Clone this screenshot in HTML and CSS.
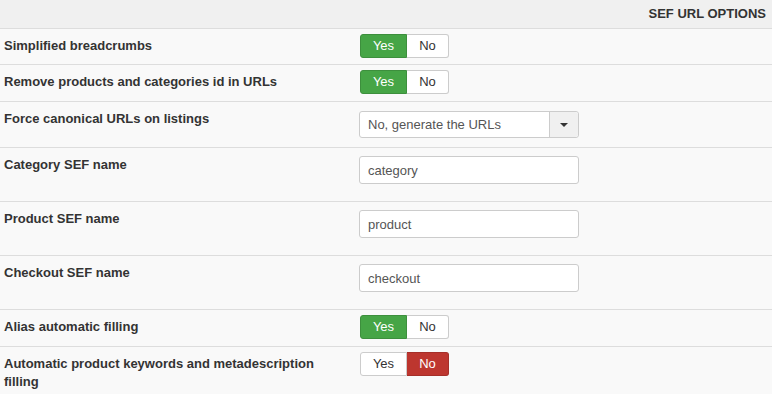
FILE: index.html
```html
<!DOCTYPE html>
<html lang="en">
<head>
    <meta charset="UTF-8">
    <title>SEF URL options</title>
    <link rel="stylesheet" href="styles.css">
</head>
<body>

    <div class="config">
        <div class="config-head">SEF URL options</div>

        <div class="row row-toggle row-first">
            <div class="key">Simplified breadcrumbs</div>
            <div class="value">
                <div class="toggle">
                    <span class="btn btn-yes active-yes">Yes</span>
                    <span class="btn btn-no">No</span>
                </div>
            </div>
        </div>

        <div class="row row-toggle">
            <div class="key">Remove products and categories id in URLs</div>
            <div class="value">
                <div class="toggle">
                    <span class="btn btn-yes active-yes">Yes</span>
                    <span class="btn btn-no">No</span>
                </div>
            </div>
        </div>

        <div class="row row-select">
            <div class="key">Force canonical URLs on listings</div>
            <div class="value">
                <div class="select">
                    <span class="select-text">No, generate the URLs</span>
                    <span class="select-arrow"><b></b></span>
                </div>
            </div>
        </div>

        <div class="row row-input">
            <div class="key">Category SEF name</div>
            <div class="value"><input class="text" type="text" value="category"></div>
        </div>

        <div class="row row-input">
            <div class="key">Product SEF name</div>
            <div class="value"><input class="text" type="text" value="product"></div>
        </div>

        <div class="row row-input">
            <div class="key">Checkout SEF name</div>
            <div class="value"><input class="text" type="text" value="checkout"></div>
        </div>

        <div class="row row-toggle">
            <div class="key">Alias automatic filling</div>
            <div class="value">
                <div class="toggle">
                    <span class="btn btn-yes active-yes">Yes</span>
                    <span class="btn btn-no">No</span>
                </div>
            </div>
        </div>

        <div class="row row-last">
            <div class="key">Automatic product keywords and metadescription filling</div>
            <div class="value">
                <div class="toggle">
                    <span class="btn btn-yes">Yes</span>
                    <span class="btn btn-no active-no">No</span>
                </div>
            </div>
        </div>
    </div>

</body>
</html>
```

FILE: styles.css
```css
body {
    font-family: 'Liberation Sans', Arial, sans-serif;
    font-size: 13px;
    line-height: 18px;
    margin: 0;
    padding: 0;
    background-color: #f9f9f9;
    color: #333;
}

.config-head {
    box-sizing: border-box;
    height: 29px;
    padding: 5px 6px 0 0;
    text-align: right;
    font-weight: bold;
    text-transform: uppercase;
    background-color: #f0f0f0;
    border-bottom: 1px solid #ddd;
}

.row {
    box-sizing: border-box;
    display: flex;
    align-items: flex-start;
    border-bottom: 1px solid #ddd;
}

.row-toggle {
    height: 37px;
}

.row-first {
    height: 36px;
}

.row-select {
    height: 46px;
}

.row-input {
    height: 54px;
}

.row-last {
    height: 48px;
    border-bottom: none;
}

.key {
    box-sizing: border-box;
    width: 359px;
    padding: 8px 10px 0 4px;
    font-weight: bold;
}

.key + .value {
    padding-top: 8px;
}

.row-toggle .value,
.row-last .value {
    padding-top: 5px;
}

.row-select .value {
    padding-top: 9px;
}

/* yes / no radio group */
.toggle {
    display: flex;
    margin-left: 1px;
}

.btn {
    box-sizing: border-box;
    height: 24px;
    line-height: 22px;
    text-align: center;
    background-color: #fff;
    border: 1px solid #ccc;
    color: #333;
}

.btn-yes {
    width: 47px;
    border-radius: 3px 0 0 3px;
}

.btn-no {
    width: 42px;
    border-left: none;
    border-radius: 0 3px 3px 0;
}

.active-yes {
    background-color: #46a546;
    border-color: #3d8f3d;
    color: #fff;
}

.active-no {
    background-color: #bd362f;
    border-color: #a52f29;
    color: #fff;
}

/* chosen-like dropdown */
.select {
    box-sizing: border-box;
    display: flex;
    width: 220px;
    height: 27px;
    background-color: #fff;
    border: 1px solid #ccc;
    border-radius: 3px;
}

.select-text {
    flex: 1;
    padding-left: 8px;
    line-height: 25px;
    color: #555;
}

.select-arrow {
    display: flex;
    align-items: center;
    justify-content: center;
    width: 28px;
    background-color: #f0f0f0;
    border-left: 1px solid #ccc;
    border-radius: 0 3px 3px 0;
}

.select-arrow b {
    width: 0;
    height: 0;
    border-left: 4px solid transparent;
    border-right: 4px solid transparent;
    border-top: 4px solid #333;
}

.text {
    box-sizing: border-box;
    width: 220px;
    height: 28px;
    margin: 0;
    padding: 0 8px;
    font-family: 'Liberation Sans', Arial, sans-serif;
    font-size: 13px;
    color: #555;
    background-color: #fff;
    border: 1px solid #ccc;
    border-radius: 3px;
}
```
